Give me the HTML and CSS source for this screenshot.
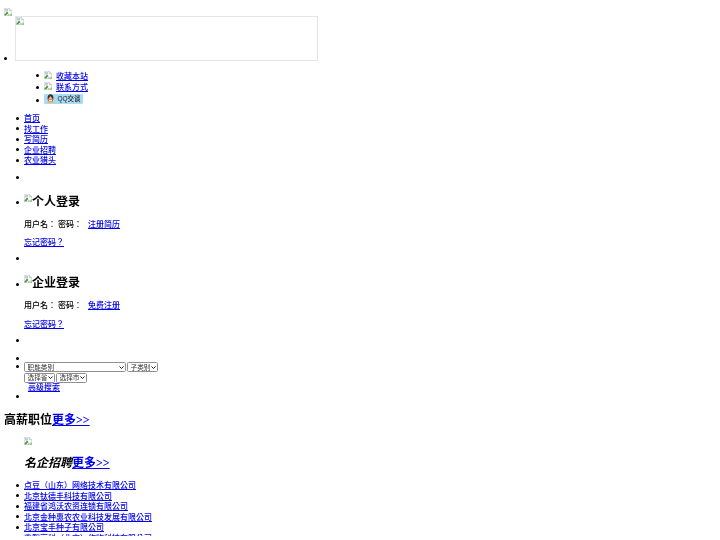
FILE: index.html
```html
<!DOCTYPE html>
<html lang="zh-TW">
<head>
<meta charset="utf-8">
<title>农业招聘</title>
<link rel="stylesheet" href="styles.css">
</head>
<body>
<svg width="0" height="0" class="defs"><defs><symbol id="broken" viewBox="0 0 16 16"><path d="M0.5 0.5h10l5 5v4l-6 6h-9z" fill="#fff" stroke="#a8a8a8"/><path d="M10.5 0.5v5h5" fill="#e4e4e4" stroke="#a8a8a8"/><path d="M2 2h6v5H2z" fill="#b8cfe8"/><path d="M1 13l5-6 3 3-5 5H1z" fill="#4f9a3c"/><path d="M7 15l3-3 1 1-2 2z" fill="#6fae5c"/><path d="M10 16l6-6v6z" fill="#9cc48c"/></symbol></defs></svg>
<div class="top"><svg class="broken"><use href="#broken"/></svg></div>
<ul class="banner-list">
  <li><span class="banner"><svg class="broken"><use href="#broken"/></svg></span></li>
</ul>
<ul class="outer">
  <li>
    <ul class="tools">
      <li><svg class="broken"><use href="#broken"/></svg> <a href="#" class="tool-link">收藏本站</a></li>
      <li><svg class="broken"><use href="#broken"/></svg> <a href="#" class="tool-link">联系方式</a></li>
      <li><span class="qq"><span class="qq-inner"><svg class="penguin" viewBox="0 0 20 20"><ellipse cx="10" cy="9" rx="6.5" ry="8.5" fill="#333"/><ellipse cx="10" cy="12" rx="4.5" ry="5" fill="#fff"/><path d="M4 10h12l-1 3H5z" fill="#e3592b"/><path d="M8 5h4l-2 2z" fill="#f3b12e"/><path d="M2 19l5-4h6l5 4z" fill="#f3a02e"/></svg><span class="qq-text">QQ交谈</span></span></span></li>
    </ul>
  </li>
</ul>
<ul class="nav">
  <li><a href="#">首页</a></li>
  <li><a href="#">找工作</a></li>
  <li><a href="#">写简历</a></li>
  <li><a href="#">企业招聘</a></li>
  <li><a href="#">农业猎头</a></li>
</ul>
<ul class="panels">
  <li class="blank"></li>
  <li class="panel">
    <h2 class="login-title"><svg class="broken"><use href="#broken"/></svg>个人登录</h2>
    <p>用户名： 密码： &nbsp;&nbsp;<a href="#">注册简历</a></p>
    <p class="last"><a href="#">忘记密码？</a></p>
  </li>
  <li class="blank"></li>
  <li class="panel">
    <h2 class="login-title"><svg class="broken"><use href="#broken"/></svg>企业登录</h2>
    <p>用户名： 密码： &nbsp;&nbsp;<a href="#">免费注册</a></p>
    <p class="last"><a href="#">忘记密码？</a></p>
  </li>
  <li class="blank"></li>
</ul>
<ul class="search">
  <li class="blank"></li>
  <li class="search-fields"><select class="sel-job"><option>职能类别</option></select>
    <select class="sel-sm"><option>子类别</option></select><br>
    <select class="sel-sm"><option>选择省</option></select>
    <select class="sel-sm"><option>选择市</option></select><br>
    <a href="#" class="adv">高级搜索</a>
  </li>
  <li class="blank"></li>
</ul>
<h2 class="section">高薪职位<a href="#">更多&gt;&gt;</a></h2>
<div class="famous">
  <svg class="broken"><use href="#broken"/></svg>
  <h2 class="famous-title"><em>名企招聘</em><a href="#">更多&gt;&gt;</a></h2>
  <ul class="companies">
    <li><a href="#">点豆（山东）网络技术有限公司</a></li>
    <li><a href="#">北京钛德丰科技有限公司</a></li>
    <li><a href="#">福建省鸿沃农资连锁有限公司</a></li>
    <li><a href="#">北京金种惠农农业科技发展有限公司</a></li>
    <li><a href="#">北京宝丰种子有限公司</a></li>
    <li><a href="#">鑫熙高科（北京）作物科技有限公司</a></li>
  </ul>
</div>
</body>
</html>
```
FILE: styles.css
```css
html {
  zoom: 0.5;
  overflow: hidden;
  height: 1080px;
}
body {
  margin: 8px;
  font-family: "Liberation Serif", "Noto Sans CJK TC", serif;
  font-size: 16px;
  font-weight: 500;
  line-height: 21px;
  color: #000;
  background: #fff;
  overflow: hidden;
  height: 1064px;
  filter: blur(0.6px);
}
a { color: #00e; }
.defs { position: absolute; }
.broken { width: 16px; height: 16px; vertical-align: baseline; }
.top { height: 16px; padding-top: 8px; }
.top .broken { display: block; }
ul { margin: 0; padding: 0 0 0 40px; list-style: none; }

/* bullets: small discs sitting on the first line's baseline */
li::before,
.panel > .login-title::before {
  content: "";
  display: inline-block;
  width: 6px;
  height: 6px;
  margin: 0 11px 0 -17px;
  border-radius: 50%;
  background: #000;
  vertical-align: 3px;
}
.outer > li::before,
.panel::before { content: none; }
.banner-list > li::before { margin: 0 17px 0 -23px; }

.banner-list { padding-left: 22px; }
.banner {
  display: inline-block;
  width: 602px;
  height: 86px;
  border: 3px solid #e4e4e4;
  vertical-align: baseline;
}
.banner .broken { display: block; }
.outer { margin-top: 12px; }
.tool-link { margin-left: 4px; }
.qq {
  display: inline-block;
  width: 78px;
  height: 21px;
  overflow: hidden;
  vertical-align: -1px;
  background: #a9dcf4;
  border-radius: 2px;
}
.qq-inner {
  display: flex;
  align-items: center;
  gap: 6px;
  height: 100%;
  padding-left: 3px;
}
.penguin { width: 18px; height: 18px; flex: none; }
.qq-text { font-family: "Liberation Sans", "Noto Sans CJK TC", sans-serif; font-size: 13px; color: #222; line-height: 16px; }
.nav { margin-top: 14px; }
.panels { margin-top: 13px; }
.blank { min-height: 21px; }
.panels > .blank:first-child { margin-bottom: 13px; }
.login-title { margin: 20px 0; font-size: 24px; line-height: 32px; }
.login-title .broken { vertical-align: 8px; }
.panels p { margin: 16px 0; }
.panels p.last { margin-bottom: 12px; }
.search { margin-top: 15px; }
.search > .blank:first-child { margin-bottom: -5px; }
.search-fields { margin-bottom: -3px; }
select {
  appearance: none;
  font-family: "Liberation Sans", "Noto Sans CJK TC", sans-serif;
  font-size: 13.333px;
  height: 20px;
  vertical-align: top;
  color: #333;
  border: 1px solid #8f8f8f;
  border-radius: 3px;
  padding: 0 12px 0 5px;
  background: #fff url("data:image/svg+xml,%3Csvg xmlns='http://www.w3.org/2000/svg' width='10' height='6'%3E%3Cpath d='M1 1l4 4 4-4' fill='none' stroke='%23222' stroke-width='2'/%3E%3C/svg%3E") no-repeat right 3px center;
}
select + select { margin-left: -2px; }
.sel-job { width: 204px; }
.sel-sm { width: 62px; }
.adv { margin-left: 8px; }
.section { margin: 18px 0 18px; font-size: 24px; line-height: 32px; }
.famous { padding-left: 40px; }
.famous .broken { display: block; }
.famous-title { margin: 20px 0 21px; font-size: 24px; line-height: 32px; }
.companies { padding-left: 0; }
```
